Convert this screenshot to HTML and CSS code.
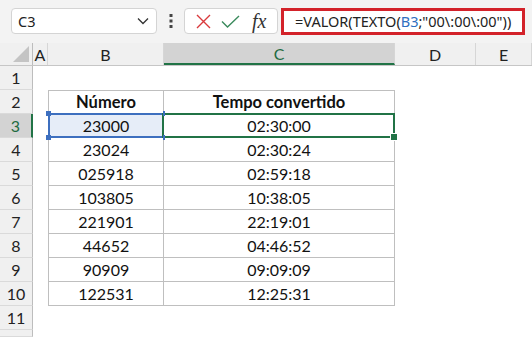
FILE: index.html
```html
<!DOCTYPE html>
<html>
<head>
<meta charset="utf-8">
<title>VALOR TEXTO</title>
<link rel="stylesheet" href="styles.css">
</head>
<body>
<div class="bar">
  <div class="namebox">
    <span>C3</span>
    <svg class="chev" width="12" height="8" viewBox="0 0 12 8"><path d="M1 1.5 L6 6.5 L11 1.5" fill="none" stroke="#333" stroke-width="1.3"/></svg>
  </div>
  <div class="grip">
    <svg width="4" height="14" viewBox="0 0 4 14"><rect x="0.5" y="0" width="3" height="3" fill="#444"/><rect x="0.5" y="5.5" width="3" height="3" fill="#444"/><rect x="0.5" y="11" width="3" height="3" fill="#444"/></svg>
  </div>
  <div class="fxbox">
    <svg width="15" height="15" viewBox="0 0 15 15"><path d="M1 1 L14 14 M14 1 L1 14" stroke="#d9393c" stroke-width="1.4" fill="none"/></svg>
    <svg width="19" height="13" viewBox="0 0 19 13"><path d="M1 6.5 L6.5 12 L18 1" stroke="#3a8a5c" stroke-width="1.4" fill="none"/></svg>
    <span class="fx">fx</span>
  </div>
  <div class="formula">=VALOR(TEXTO(<span class="ref">B3</span>;"00\:00\:00"))</div>
</div>

<div class="sheet">
  <div class="row head">
    <div class="corner"><svg width="16" height="16" viewBox="0 0 16 16"><polygon points="16,0 16,16 0,16" fill="#c4c4c4"/></svg></div>
    <div class="ch">A</div>
    <div class="ch">B</div>
    <div class="ch sel">C</div>
    <div class="ch">D</div>
    <div class="ch">E</div>
  </div>
  <div class="row">
    <div class="rh">1</div><div></div><div></div><div></div><div></div><div></div>
  </div>
  <div class="row">
    <div class="rh">2</div><div></div>
    <div class="t tl top th">Número</div><div class="t top th">Tempo convertido</div>
    <div></div><div></div>
  </div>
  <div class="row">
    <div class="rh sel">3</div><div></div>
    <div class="t tl ref-cell">23000<i class="h h1"></i><i class="h h2"></i><i class="h h3"></i><i class="h h4"></i></div>
    <div class="t active">02:30:00<i class="fill"></i></div>
    <div></div><div></div>
  </div>
  <div class="row">
    <div class="rh">4</div><div></div>
    <div class="t tl">23024</div><div class="t">02:30:24</div>
    <div></div><div></div>
  </div>
  <div class="row">
    <div class="rh">5</div><div></div>
    <div class="t tl">025918</div><div class="t">02:59:18</div>
    <div></div><div></div>
  </div>
  <div class="row">
    <div class="rh">6</div><div></div>
    <div class="t tl">103805</div><div class="t">10:38:05</div>
    <div></div><div></div>
  </div>
  <div class="row">
    <div class="rh">7</div><div></div>
    <div class="t tl">221901</div><div class="t">22:19:01</div>
    <div></div><div></div>
  </div>
  <div class="row">
    <div class="rh">8</div><div></div>
    <div class="t tl">44652</div><div class="t">04:46:52</div>
    <div></div><div></div>
  </div>
  <div class="row">
    <div class="rh">9</div><div></div>
    <div class="t tl">90909</div><div class="t">09:09:09</div>
    <div></div><div></div>
  </div>
  <div class="row">
    <div class="rh">10</div><div></div>
    <div class="t tl">122531</div><div class="t">12:25:31</div>
    <div></div><div></div>
  </div>
  <div class="row">
    <div class="rh">11</div><div></div><div></div><div></div><div></div><div></div>
  </div>
  <div class="row short">
    <div class="rh"></div><div></div><div></div><div></div><div></div><div></div>
  </div>
</div>
</body>
</html>
```

FILE: styles.css
```css
html, body {
  margin: 0;
  padding: 0;
  background: #ffffff;
  overflow: hidden;
}
body {
  width: 532px;
  height: 337px;
}

/* formula bar */
.bar {
  height: 43px;
  box-sizing: border-box;
  padding: 8px 0 0 11px;
  background: #f3f3f3;
  display: flex;
  align-items: flex-start;
  font-family: "Noto Sans", sans-serif;
  color: #222;
}
.namebox {
  width: 146px;
  height: 26px;
  box-sizing: border-box;
  background: #fff;
  border: 1px solid #d4d4d4;
  border-radius: 4px;
  display: flex;
  align-items: center;
  justify-content: space-between;
  padding: 0 7px 0 6px;
  font-size: 14.5px;
}
.grip {
  width: 27px;
  height: 26px;
  display: flex;
  align-items: center;
  justify-content: center;
}
.fxbox {
  width: 94px;
  height: 26px;
  box-sizing: border-box;
  background: #fff;
  border: 1px solid #d4d4d4;
  border-radius: 4px;
  display: flex;
  align-items: center;
  padding-left: 11px;
  gap: 10px;
}
.fx {
  font-family: "Liberation Serif", serif;
  font-style: italic;
  font-size: 20px;
  color: #333;
  margin-left: 2px;
}
.formula {
  margin-left: 3px;
  width: 244px;
  height: 27px;
  box-sizing: border-box;
  background: #fff;
  border: 3px solid #d3222a;
  padding-left: 11px;
  font-size: 14.5px;
  line-height: 21px;
  white-space: nowrap;
}
.ref {
  color: #2f6fc0;
}

/* grid */
.sheet {
  font-family: "Lato", sans-serif;
  font-size: 16px;
  color: #111;
}
.row {
  display: grid;
  grid-template-columns: 33px 15px 116px 231px 81px 56px;
  height: 24px;
}
.row.short {
  height: 7px;
}
.row > div {
  box-sizing: border-box;
  display: flex;
  align-items: center;
  justify-content: center;
  position: relative;
}
.row.head {
  height: 23px;
  background: #f0f0f0;
  border-bottom: 1px solid #c6c6c6;
  box-sizing: border-box;
}
.ch {
  border-right: 1px solid #d6d6d6;
  color: #222;
}
.ch.sel {
  background: #d3d3d3;
  color: #1e6b41;
  border-bottom: 2px solid #217346;
}
.corner {
  border-right: 1px solid #bdbdbd;
  justify-content: flex-end !important;
  align-items: flex-end !important;
  padding: 0 3px 3px 0;
}
.rh {
  background: #f0f0f0;
  border-right: 1px solid #bdbdbd;
  border-bottom: 1px solid #dadada;
  color: #222;
}
.rh.sel {
  background: #d3d3d3;
  color: #1e6b41;
  border-right: 2px solid #217346;
}

/* table */
.t {
  border-right: 1px solid #bfbfbf;
  border-bottom: 1px solid #bfbfbf;
}
.tl {
  border-left: 1px solid #bfbfbf;
}
.top {
  border-top: 1px solid #bfbfbf;
}
.th {
  font-weight: bold;
  font-size: 16.5px;
}
.ref-cell {
  background: #e6edf8;
}
.ref-cell::after {
  content: "";
  position: absolute;
  left: -1px;
  top: -1px;
  right: -1px;
  bottom: -1px;
  border: 2px solid #3d6fbf;
}
.h {
  position: absolute;
  width: 5px;
  height: 5px;
  background: #3d6fbf;
  z-index: 2;
}
.h1 { left: -3px; top: -3px; }
.h2 { left: -3px; bottom: -3px; }
.h3 { right: -2px; top: -3px; width: 2px; }
.h4 { right: -2px; bottom: -3px; width: 2px; }
.active::after {
  content: "";
  position: absolute;
  left: -2px;
  top: -1px;
  right: -1px;
  bottom: -1px;
  border: 2px solid #217346;
}
.fill {
  position: absolute;
  right: -4px;
  bottom: -4px;
  width: 6px;
  height: 6px;
  background: #217346;
  border: 1px solid #fff;
  z-index: 2;
}
```
